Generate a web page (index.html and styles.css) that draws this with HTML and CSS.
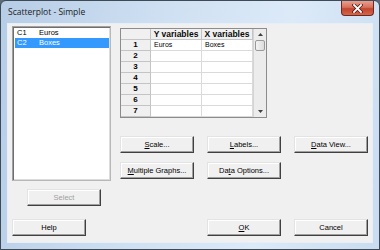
FILE: index.html
```html
<!DOCTYPE html>
<html lang="en">
<head>
    <meta charset="UTF-8">
    <title>Scatterplot - Simple</title>
    <link rel="stylesheet" href="styles.css">
</head>
<body>
    <div class="window">
        <div class="titlebar">
            <span class="title">Scatterplot - Simple</span>
            <span class="close">
                <svg width="11" height="9" viewBox="0 0 11 9">
                    <path d="M2 1 L9 8 M9 1 L2 8" stroke="#5a1a12" stroke-width="3.4" stroke-linecap="square"/>
                    <path d="M2 1 L9 8 M9 1 L2 8" stroke="#fff" stroke-width="1.8" stroke-linecap="square"/>
                </svg>
            </span>
        </div>

        <div class="client">
            <div class="left-col">
                <div class="listbox">
                    <div class="list-item"><span class="col-id">C1</span><span>Euros</span></div>
                    <div class="list-item selected"><span class="col-id">C2</span><span>Boxes</span></div>
                </div>
                <div class="btn disabled select-btn">Select</div>
                <div class="btn help-btn">Help</div>
            </div>

            <div class="right-col">
                <div class="sheet">
                    <div class="cells">
                        <div class="hcell"></div>
                        <div class="hcell">Y variables</div>
                        <div class="hcell">X variables</div>

                        <div class="rcell">1</div><div class="dcell">Euros</div><div class="dcell">Boxes</div>
                        <div class="rcell">2</div><div class="dcell"></div><div class="dcell"></div>
                        <div class="rcell">3</div><div class="dcell"></div><div class="dcell"></div>
                        <div class="rcell">4</div><div class="dcell"></div><div class="dcell"></div>
                        <div class="rcell">5</div><div class="dcell"></div><div class="dcell"></div>
                        <div class="rcell">6</div><div class="dcell"></div><div class="dcell"></div>
                        <div class="rcell">7</div><div class="dcell"></div><div class="dcell"></div>
                    </div>
                    <div class="vscroll">
                        <div class="arrow">
                            <svg width="5" height="3" viewBox="0 0 5 3"><path d="M0 3 L2.5 0 L5 3 Z" fill="#404040"/></svg>
                        </div>
                        <div class="thumb"></div>
                        <div class="track"></div>
                        <div class="arrow">
                            <svg width="5" height="3" viewBox="0 0 5 3"><path d="M0 0 L5 0 L2.5 3 Z" fill="#404040"/></svg>
                        </div>
                    </div>
                </div>

                <div class="btn-row first-row">
                    <div class="btn"><u>S</u>cale...</div>
                    <div class="btn"><u>L</u>abels...</div>
                    <div class="btn"><u>D</u>ata View...</div>
                </div>
                <div class="btn-row second-row">
                    <div class="btn"><u>M</u>ultiple Graphs...</div>
                    <div class="btn">Da<u>t</u>a Options...</div>
                </div>
                <div class="btn-row bottom-row">
                    <div></div>
                    <div class="btn"><u>O</u>K</div>
                    <div class="btn">Cancel</div>
                </div>
            </div>
        </div>
    </div>
</body>
</html>
```

FILE: styles.css
```css
body {
    margin: 0;
    font-family: "Liberation Sans", Arial, sans-serif;
    background: #5d6b78;
}

.window {
    width: 380px;
    height: 250px;
    box-sizing: border-box;
    border: 1px solid #3e4a56;
    border-radius: 6px 6px 0 0;
    padding: 0 7px 7px 7px;
    background: linear-gradient(100deg, #b6cde6 0%, #cfe0f2 40%, #dceaf8 70%, #c9dcf0 100%);
    display: flex;
    flex-direction: column;
}

.titlebar {
    height: 23px;
    margin: 0 -7px;
    padding: 0 5px 0 7px;
    display: flex;
    justify-content: space-between;
    align-items: flex-start;
}

.title {
    font-family: "Open Sans", "Liberation Sans", sans-serif;
    font-size: 8.5px;
    color: #1b1b1b;
    padding-top: 5px;
}

.close {
    width: 33px;
    height: 15px;
    box-sizing: border-box;
    border: 1px solid #6b2a20;
    border-top: none;
    border-radius: 0 0 4px 4px;
    background: linear-gradient(#e9a08f 0%, #d7705b 45%, #c2452d 55%, #d4664c 100%);
    display: flex;
    align-items: center;
    justify-content: center;
}

.client {
    flex: 1;
    background: #f0f0f0;
    box-shadow: 0 0 0 1px #e6eef7;
    padding: 2px 4px 0 4px;
    display: grid;
    grid-template-columns: 99px 1fr;
    column-gap: 9px;
    font-size: 7.5px;
    color: #000;
}

.left-col {
    display: flex;
    flex-direction: column;
}

.listbox {
    height: 155px;
    box-sizing: border-box;
    background: #fff;
    border: 1px solid;
    border-color: #a0a0a0 #b8b8b8 #b8b8b8 #a0a0a0;
    box-shadow: inset 1px 1px 0 #6e6e6e, inset -1px -1px 0 #dcdcdc;
    padding: 1px 1px 0 2px;
    font-size: 7.5px;
}

.list-item {
    height: 10px;
    line-height: 10px;
    padding-left: 2px;
    display: flex;
}

.list-item.selected {
    background: #3399ff;
    color: #fff;
}

.col-id {
    width: 22px;
}

.btn {
    width: 74px;
    height: 17px;
    box-sizing: border-box;
    background: #f0f0f0;
    border: 1px solid;
    border-color: #e3e3e3 #404040 #404040 #e3e3e3;
    box-shadow: inset -1px -1px 0 #a0a0a0, inset 1px 1px 0 #fff;
    display: flex;
    align-items: center;
    justify-content: center;
    font-size: 7.5px;
    white-space: nowrap;
}

.btn.disabled {
    color: #a0a0a0;
}

.select-btn {
    margin: 8px 0 0 15px;
}

.help-btn {
    margin-top: 13px;
}

.right-col {
    display: flex;
    flex-direction: column;
}

.sheet {
    margin-top: 2px;
    width: 147px;
    height: 90px;
    box-sizing: border-box;
    border: 1px solid #8c8c8c;
    display: flex;
    background: #fff;
}

.cells {
    display: grid;
    grid-template-columns: 30px 51px 51px;
    grid-auto-rows: 11px;
}

.hcell, .rcell, .dcell {
    box-sizing: border-box;
    border-right: 1px solid #c4c4c4;
    border-bottom: 1px solid #c4c4c4;
    line-height: 10px;
    white-space: nowrap;
    overflow: hidden;
}

.hcell {
    background: #f0f0f0;
    font-weight: bold;
    font-size: 8.5px;
    text-align: center;
    color: #0a0a0a;
}

.rcell {
    background: #f0f0f0;
    font-weight: bold;
    font-size: 8px;
    text-align: center;
}

.dcell {
    border-color: #dadada;
    padding-left: 3px;
    font-size: 7px;
}

.vscroll {
    width: 13px;
    background: #ececec;
    border-left: 1px solid #d4d4d4;
    display: flex;
    flex-direction: column;
}

.vscroll .arrow {
    height: 11px;
    display: flex;
    align-items: center;
    justify-content: center;
}

.vscroll .thumb {
    height: 11px;
    margin: 0 1px;
    box-sizing: border-box;
    border: 1px solid #9a9a9a;
    border-radius: 2px;
    background: linear-gradient(90deg, #f4f4f4, #dcdcdc);
}

.vscroll .track {
    flex: 1;
}

.btn-row {
    display: grid;
    grid-template-columns: 74px 74px 74px;
    column-gap: 13px;
}

.first-row {
    margin-top: 18px;
}

.second-row {
    margin-top: 9px;
}

.bottom-row {
    margin-top: 40px;
}
```
